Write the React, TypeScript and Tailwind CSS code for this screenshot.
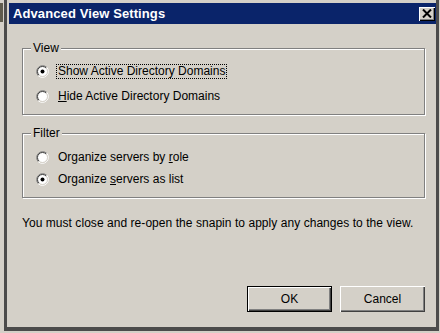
import React from 'react';

function Radio({ checked }: { checked?: boolean }) {
  return (
    <svg width="13" height="13" viewBox="0 0 13 13" className="shrink-0">
      <circle cx="6.5" cy="6.5" r="5" fill="#fff" />
      <path d="M2.26 10.74 A6 6 0 0 1 10.74 2.26" fill="none" stroke="#808080" strokeWidth="1" />
      <path d="M10.74 2.26 A6 6 0 0 1 2.26 10.74" fill="none" stroke="#ffffff" strokeWidth="1" />
      <path d="M2.96 10.04 A5 5 0 0 1 10.04 2.96" fill="none" stroke="#404040" strokeWidth="1" />
      <path d="M10.04 2.96 A5 5 0 0 1 2.96 10.04" fill="none" stroke="#d4d0c8" strokeWidth="1" />
      {checked && <circle cx="6.5" cy="6.5" r="2" fill="#000" />}
    </svg>
  );
}

function Option({ checked, focused, children }: { checked?: boolean; focused?: boolean; children: React.ReactNode }) {
  return (
    <div className="flex items-center h-[14px] pl-[13px] gap-[7px]">
      <Radio checked={checked} />
      <span className={focused ? 'border border-dotted border-black px-[1px] leading-[13px]' : 'pl-[2px] leading-[14px]'}>
        {children}
      </span>
    </div>
  );
}

function GroupBox({ label, className, children }: { label: string; className: string; children: React.ReactNode }) {
  return (
    <div className={`relative border border-[#808080] shadow-[inset_1px_1px_0_#fff,1px_1px_0_#fff] ${className}`}>
      <span className="absolute left-[8px] top-[-8px] px-[2px] bg-[#d4d0c8] leading-[14px]">{label}</span>
      {children}
    </div>
  );
}

const raised = 'shadow-[inset_1px_1px_0_#fff,inset_-1px_-1px_0_#404040,inset_-2px_-2px_0_#808080]';

export default function App() {
  return (
    <div className="w-[440px] h-[333px] bg-[#d4d0c8] flex text-[12px] text-black font-['Liberation_Sans',Arial,sans-serif] overflow-hidden">
      <div className="w-[4px] pt-[3px]">
        <div className="h-[19px] w-[3px] bg-[#5f5b4d]" />
      </div>
      <div className="w-[435px] h-[331px] flex flex-col border-l-[3px] border-r-[3px] border-b-[4px] border-[#4b4b4b] pt-[3px] pl-[2px]">
        <div className="h-[21px] bg-[#0a246a] flex items-center justify-between pl-[4px] pr-[1px]">
          <span className="text-white font-bold text-[13px] leading-[16px] tracking-[0.1px]">Advanced View Settings</span>
          <div className="w-[16px] h-[14px] bg-[#d4d0c8] flex items-center justify-center shadow-[inset_1px_1px_0_#fff,inset_-1px_-1px_0_#000,inset_-2px_-2px_0_#808080]">
            <svg width="10" height="9" viewBox="0 0 10 9">
              <path d="M1 0.5 L9 8.5 M9 0.5 L1 8.5" stroke="#000" strokeWidth="2" />
            </svg>
          </div>
        </div>

        <div className="flex-1 flex flex-col pl-[13px] pr-[11px] pb-[15px]">
          <GroupBox label="View" className="mt-[24px] h-[67px] pt-[15px] flex flex-col gap-[11px]">
            <Option checked focused>Show Active Directory Domains</Option>
            <Option>
              <span className="underline">H</span>ide Active Directory Domains
            </Option>
          </GroupBox>

          <GroupBox label="Filter" className="mt-[18px] h-[65px] pt-[16px] flex flex-col gap-[8px]">
            <Option>
              Organize servers by <span className="underline">r</span>ole
            </Option>
            <Option checked>
              Organize <span className="underline">s</span>ervers as list
            </Option>
          </GroupBox>

          <p className="mt-[18px] leading-[14px] tracking-[0.05px]">You must close and re-open the snapin to apply any changes to the view.</p>

          <div className="mt-auto flex justify-end gap-[8px]">
            <button className={`w-[85px] h-[26px] border border-black bg-[#d4d0c8] ${raised}`}>OK</button>
            <button className={`w-[85px] h-[26px] bg-[#d4d0c8] ${raised}`}>Cancel</button>
          </div>
        </div>
      </div>
    </div>
  );
}
